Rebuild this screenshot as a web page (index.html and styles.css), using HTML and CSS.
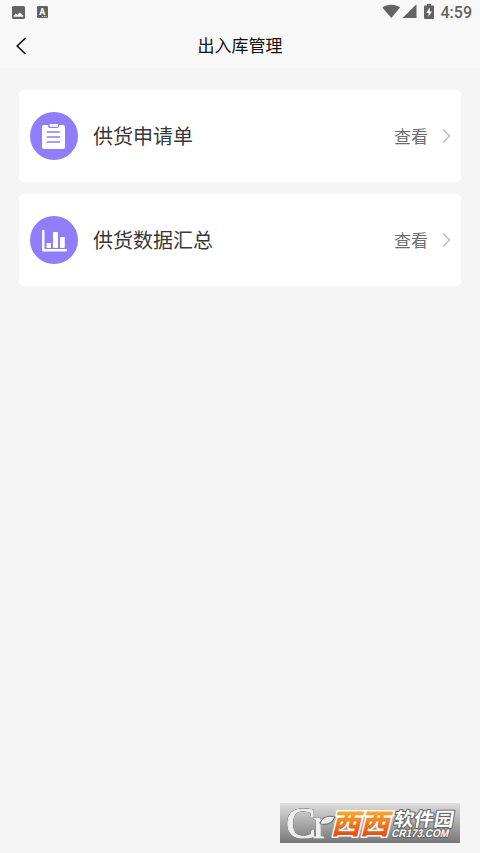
FILE: index.html
```html
<!DOCTYPE html>
<html lang="zh-CN">
<head>
    <meta charset="UTF-8">
    <meta name="viewport" content="width=device-width, initial-scale=1.0">
    <title>出入库管理</title>
    <link rel="stylesheet" href="styles.css">
</head>
<body>

<div class="header">
    <!--状态栏-->
    <div class="status">
        <svg class="status__photo" width="13" height="13" viewBox="0 0 13 13">
            <rect width="13" height="13" rx="1.5" fill="#636363"/>
            <path d="M1.700 10.700V9.500L4 7.500l1.400 1.500L7.700 6.500l3.600 3v1.200z" fill="#fff"/>
        </svg>
        <svg class="status__lang" width="11" height="12" viewBox="0 0 11 12">
            <rect width="11" height="12" rx="1" fill="#636363"/>
            <text x="5.300" y="9" text-anchor="middle" font-size="9" font-weight="700" fill="#fff">A</text>
            <path d="M5 10.500h5" stroke="#ddd" stroke-width=".8" stroke-dasharray="1.200 .6"/>
        </svg>
        <svg class="status__signal" width="53" height="16" viewBox="0 0 53 16">
            <path d="M.4 3.400C5.200-.3 13.200-.3 18 3.400L9.300 14z" fill="#636363"/>
            <path d="M34.500 .3V14H20.500z" fill="#636363"/>
            <path d="M43 1.400h2V0h4v1.400h2q1 0 1 1V14q0 1-1 1h-8q-1 0-1-1V2.400q0-1 1-1z" fill="#636363"/>
            <path d="M47.700 3.400 44.200 9h2.300v3.800L50 7.400h-2.300z" fill="#fff"/>
        </svg>
        <span class="status__time">4:59</span>
    </div>
    <!--标题栏-->
    <div class="nav">
        <svg class="nav__back" width="12" height="18" viewBox="0 0 12 18">
            <path d="M10.500 1 2.200 9l8.300 8" fill="none" stroke="#111" stroke-width="1.600"/>
        </svg>
        <h1 class="nav__title">出入库管理</h1>
    </div>
</div>

<div class="list">
    <div class="card">
        <span class="card__icon">
            <svg width="48" height="48" viewBox="0 0 48 48">
                <rect x="12" y="13" width="23" height="24" rx="2" fill="#fff"/>
                <path d="M18 12.500h11V14q0 2-2 2h-7q-2 0-2-2z" fill="#8f7dfc"/>
                <rect x="19.500" y="12" width="8.500" height="2.800" rx="1" fill="#fff"/>
                <path d="M17.500 20h12M17.500 25h12M17.500 30h12" stroke="#8f7dfc" stroke-width="1.700" stroke-linecap="round"/>
            </svg>
        </span>
        <span class="card__name">供货申请单</span>
        <span class="card__more">查看</span>
        <svg class="card__arrow" width="9" height="16" viewBox="0 0 9 16">
            <path d="M1 1.500l6.800 6.500L1 14.500" fill="none" stroke="#bcbcbc" stroke-width="1.300"/>
        </svg>
    </div>
    <div class="card">
        <span class="card__icon">
            <svg width="48" height="48" viewBox="0 0 48 48">
                <path d="M13.300 15v19.300H36" fill="none" stroke="#fff" stroke-width="2.400" stroke-linecap="round" stroke-linejoin="round"/>
                <rect x="16.500" y="27" width="4.500" height="5" rx=".8" fill="#fff"/>
                <rect x="23" y="16" width="5" height="16" rx=".8" fill="#fff"/>
                <rect x="30" y="21" width="4.800" height="11" rx=".8" fill="#fff"/>
            </svg>
        </span>
        <span class="card__name">供货数据汇总</span>
        <span class="card__more">查看</span>
        <svg class="card__arrow" width="9" height="16" viewBox="0 0 9 16">
            <path d="M1 1.500l6.800 6.500L1 14.500" fill="none" stroke="#bcbcbc" stroke-width="1.300"/>
        </svg>
    </div>
</div>

<!--水印-->
<svg class="mark" width="180" height="40" viewBox="0 0 180 40">
    <defs>
        <linearGradient id="orange" x1="0" y1="0" x2="0" y2="1">
            <stop offset=".2" stop-color="#fcb02f"/>
            <stop offset=".85" stop-color="#e24c12"/>
        </linearGradient>
    </defs>
    <g class="mark__logo">
        <text class="mark__edge" x="6" y="35">Cr</text>
        <path d="M40 20q4-9 15-6-4 9-14 7z"/>
    </g>
    <g class="mark__west" transform="translate(51 31) skewX(-14)">
        <text x="0" y="0" textLength="58" lengthAdjust="spacingAndGlyphs">西西</text>
    </g>
    <g class="mark__name" transform="translate(113 23) skewX(-10)">
        <text x="0" y="0" textLength="60" lengthAdjust="spacingAndGlyphs">软件园</text>
    </g>
    <g class="mark__site" transform="translate(111 34) skewX(-15)">
        <text x="0" y="0" textLength="57" lengthAdjust="spacingAndGlyphs">CR173.COM</text>
    </g>
</svg>

</body>
</html>
```
FILE: styles.css
```css
* {
    box-sizing: border-box;
    margin: 0;
    padding: 0;
}

body {
    height: 100vh;
    overflow: hidden;
    background-color: #f5f5f5;
    color: #383838;
    font-family: Roboto, "Noto Sans CJK SC", sans-serif;
}

svg {
    display: block;
    flex: none;
}

.header {
    height: 68px;
    background-color: #f8f8f8;
}

/* 状态栏 */
.status {
    display: flex;
    height: 24px;
    padding: 0 8px 0 12px;
    align-items: center;
    color: #636363;
}

.status__lang {
    margin-left: 12px;
}

.status__signal {
    margin: 0 6px 0 auto;
}

.status__time {
    font-size: 16px;
    font-weight: 500;
    line-height: 24px;
    padding-top: 2px;
}

/* 标题栏 */
.nav {
    display: grid;
    grid-template-columns: 12px 1fr 12px;
    height: 44px;
    padding: 0 15px;
    align-items: center;
}

.nav__title {
    color: #111;
    font-size: 17px;
    font-weight: 400;
    line-height: 44px;
    text-align: center;
}

/* 列表 */
.list {
    display: flex;
    flex-direction: column;
    gap: 12px;
    padding: 22px 19px;
}

.card {
    display: flex;
    height: 92px;
    padding: 0 10px 0 11px;
    align-items: center;
    border-radius: 5px;
    background-color: #fff;
}

.card__icon {
    width: 48px;
    height: 48px;
    border-radius: 50%;
    background-color: #8f7dfc;
}

.card__name {
    margin-left: 15px;
    padding-bottom: 2px;
    font-size: 20px;
}

.card__more {
    margin-left: auto;
    padding-bottom: 2px;
    color: #6c6c6c;
    font-size: 17px;
}

.card__arrow {
    margin-left: 14px;
}

/* 水印 */
.mark {
    position: absolute;
    left: 280px;
    top: 803px;
    overflow: visible;
    background: linear-gradient(#dedede, #777);
}

.mark text {
    paint-order: stroke;
    stroke-linejoin: round;
}

.mark__logo {
    fill: #eee;
    stroke: #777;
    stroke-width: 1.2px;
    font-family: "Liberation Serif", serif;
    font-size: 45px;
    font-weight: 400;
}

/* 白边加粗字形，外面再描一圈灰 */
.mark__edge {
    letter-spacing: -3px;
    stroke: #eee;
    stroke-width: 1.2px;
    filter: drop-shadow(0 0 .6px #444) drop-shadow(0 0 .6px #444);
}

.mark__west {
    fill: url(#orange);
    stroke: #fff;
    stroke-width: 3px;
    font-family: "Noto Sans CJK SC", sans-serif;
    font-size: 28px;
    font-weight: 900;
}

.mark__name {
    fill: #fff;
    stroke: #666;
    stroke-width: 2px;
    font-family: "Noto Sans CJK SC", sans-serif;
    font-size: 19px;
    font-weight: 700;
}

.mark__site {
    fill: #fff;
    stroke: #666;
    stroke-width: 2px;
    font-family: "Liberation Sans", sans-serif;
    font-size: 11px;
    font-weight: 700;
}
```
